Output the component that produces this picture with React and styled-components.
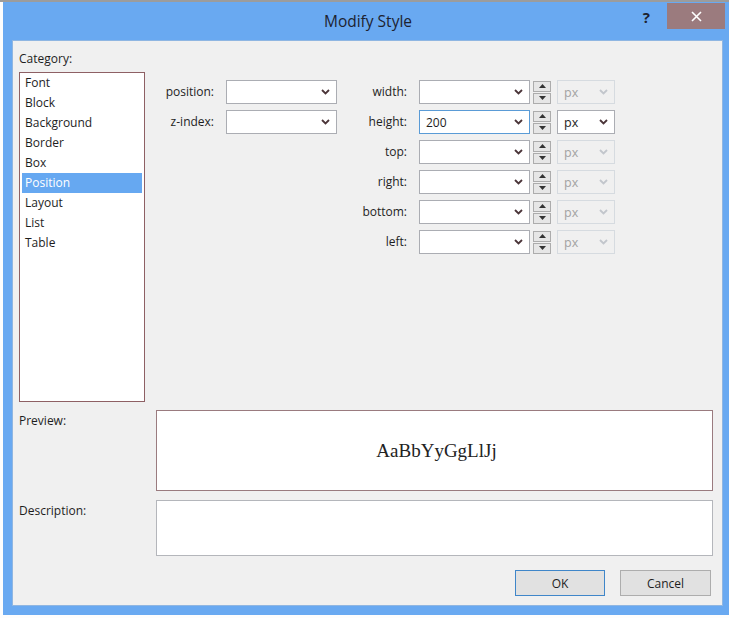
import React from 'react';
import styled, { createGlobalStyle } from 'styled-components';

const GlobalStyle = createGlobalStyle`
    html, body {
        margin: 0;
        padding: 0;
        background: #fdfdfd;
    }
    body {
        font-family: "Open Sans", "Noto Sans", sans-serif;
        font-size: 12px;
        color: #1e1e1e;
    }
`;

const Page = styled.div`
    width: 729px;
    height: 618px;
    border-top: 2px solid #9c9c9c;
    box-sizing: border-box;
    padding-left: 3px;
    overflow: hidden;
`;

const Window = styled.div`
    width: 726px;
    height: 613px;
    background: #69a9f1;
    display: flex;
    flex-direction: column;
    box-sizing: border-box;
`;

const TitleBar = styled.div`
    height: 38px;
    display: flex;
    align-items: center;
    position: relative;
`;

const Title = styled.div`
    flex: 1;
    text-align: center;
    font-size: 15.5px;
    color: #1d2330;
    padding-left: 4px;
`;

const HelpMark = styled.span`
    position: absolute;
    right: 79px;
    top: 5px;
    font-size: 15px;
    font-weight: 700;
    color: #1c2230;
`;

const CloseButton = styled.div`
    position: absolute;
    right: 4px;
    top: 1px;
    width: 58px;
    height: 26px;
    background: #9b7b7e;
    display: flex;
    align-items: center;
    justify-content: center;
`;

const Client = styled.div`
    margin: 0 6px 0 9px;
    height: 566px;
    background: #f0f0f0;
    border: 1px solid #8fb6e2;
    box-sizing: border-box;
    padding: 10px 6px 9px 6px;
    display: flex;
    flex-direction: column;
`;

const Top = styled.div`
    display: flex;
    align-items: flex-start;
`;

const CategoryCol = styled.div`
    width: 126px;
    display: flex;
    flex-direction: column;
`;

const Caption = styled.div`
    height: 21px;
    line-height: 16px;
`;

const ListBox = styled.div`
    height: 330px;
    background: #fff;
    border: 1px solid #8e6064;
    box-sizing: border-box;
    padding: 0 2px;
`;

const ListItem = styled.div`
    height: 20px;
    line-height: 20px;
    padding-left: 3px;
    background: ${p => (p.$selected ? '#66a8f1' : 'transparent')};
    color: ${p => (p.$selected ? '#fff' : '#1e1e1e')};
`;

const Fields = styled.div`
    display: flex;
    align-items: flex-start;
    margin-top: 29px;
`;

const FieldGrid = styled.div`
    display: grid;
    grid-template-columns: ${p => p.$label}px 111px ${p => (p.$units ? '21px 64px' : '')};
    row-gap: 6px;
    align-items: center;
`;

const Label = styled.div`
    text-align: right;
    padding-right: 12px;
    line-height: 24px;
`;

const Combo = styled.div`
    height: 24px;
    box-sizing: border-box;
    border: 1px solid ${p => (p.$focus ? '#5a9bd6' : p.$disabled ? '#d6dbe0' : '#abadb3')};
    background: ${p => (p.$disabled ? '#f0f0f0' : '#fff')};
    color: ${p => (p.$disabled ? '#a3a3a3' : '#1e1e1e')};
    display: flex;
    align-items: center;
    justify-content: space-between;
    padding: 0 6px 0 6px;
    margin-left: ${p => p.$gap || 0}px;
    font-size: ${p => (p.$small ? '12.5px' : '12px')};
`;

const Spinner = styled.div`
    display: flex;
    flex-direction: column;
    gap: 1px;
    margin-left: 3px;
    width: 18px;
`;

const SpinBtn = styled.div`
    height: 11px;
    border: 1px solid #acacac;
    background: #e6e6e6;
    box-sizing: border-box;
    display: flex;
    align-items: center;
    justify-content: center;
`;

const Row = styled.div`
    display: flex;
    align-items: flex-start;
    margin-top: ${p => p.$top}px;
`;

const RowLabel = styled.div`
    width: 137px;
    padding-top: 2px;
`;

const PreviewBox = styled.div`
    width: 557px;
    height: 81px;
    box-sizing: border-box;
    border: 1px solid #9a7b7f;
    background: #fff;
    display: flex;
    align-items: center;
    justify-content: center;
    font-family: "Liberation Serif", "Times New Roman", serif;
    font-size: 19px;
    color: #222;
    padding-left: 4px;
`;

const DescBox = styled.div`
    width: 557px;
    height: 56px;
    box-sizing: border-box;
    border: 1px solid #b4b6bb;
    background: #fff;
`;

const Buttons = styled.div`
    display: flex;
    justify-content: flex-end;
    gap: 15px;
    margin-top: 14px;
    padding-right: 5px;
`;

const Button = styled.div`
    width: ${p => p.$w}px;
    height: 26px;
    box-sizing: border-box;
    border: 1px solid ${p => (p.$default ? '#3f86c9' : '#adadad')};
    background: #e1e1e1;
    display: flex;
    align-items: center;
    justify-content: center;
`;

const Chevron = ({ color = '#4b3539' }) => (
    <svg width="9" height="6" viewBox="0 0 9 6">
        <polyline points="1,1 4.5,4.5 8,1" fill="none" stroke={color} strokeWidth="1.8" />
    </svg>
);

const Arrow = ({ up }) => (
    <svg width="7" height="4" viewBox="0 0 7 4">
        <polygon points={up ? '0,4 3.5,0 7,4' : '0,0 3.5,4 7,0'} fill="#333" />
    </svg>
);

const categories = ['Font', 'Block', 'Background', 'Border', 'Box', 'Position', 'Layout', 'List', 'Table'];

const boxFields = [
    { name: 'width', value: '', active: false },
    { name: 'height', value: '200', active: true },
    { name: 'top', value: '', active: false },
    { name: 'right', value: '', active: false },
    { name: 'bottom', value: '', active: false },
    { name: 'left', value: '', active: false },
];

const App = () => {
    return (
        <>
            <GlobalStyle />
            <Page>
                <Window>
                    <TitleBar>
                        <Title>Modify Style</Title>
                        <HelpMark>?</HelpMark>
                        <CloseButton>
                            <svg width="11" height="11" viewBox="0 0 11 11">
                                <path d="M1 1 L10 10 M10 1 L1 10" stroke="#fff" strokeWidth="1.6" />
                            </svg>
                        </CloseButton>
                    </TitleBar>
                    <Client>
                        <Top>
                            <CategoryCol>
                                <Caption>Category:</Caption>
                                <ListBox>
                                    {categories.map(c => (
                                        <ListItem key={c} $selected={c === 'Position'}>{c}</ListItem>
                                    ))}
                                </ListBox>
                            </CategoryCol>
                            <Fields>
                                <FieldGrid $label={81}>
                                    <Label>position:</Label>
                                    <Combo><span /><Chevron /></Combo>
                                    <Label>z-index:</Label>
                                    <Combo><span /><Chevron /></Combo>
                                </FieldGrid>
                                <FieldGrid $label={82} $units>
                                    {boxFields.map(f => (
                                        <React.Fragment key={f.name}>
                                            <Label>{f.name}:</Label>
                                            <Combo $focus={f.active}><span>{f.value}</span><Chevron /></Combo>
                                            <Spinner>
                                                <SpinBtn><Arrow up /></SpinBtn>
                                                <SpinBtn><Arrow /></SpinBtn>
                                            </Spinner>
                                            <Combo $gap={6} $disabled={!f.active} $small>
                                                <span>px</span>
                                                <Chevron color={f.active ? '#4b3539' : '#c2c6cc'} />
                                            </Combo>
                                        </React.Fragment>
                                    ))}
                                </FieldGrid>
                            </Fields>
                        </Top>
                        <Row $top={8}>
                            <RowLabel>Preview:</RowLabel>
                            <PreviewBox>AaBbYyGgLlJj</PreviewBox>
                        </Row>
                        <Row $top={9}>
                            <RowLabel>Description:</RowLabel>
                            <DescBox />
                        </Row>
                        <Buttons>
                            <Button $w={90} $default>OK</Button>
                            <Button $w={91}>Cancel</Button>
                        </Buttons>
                    </Client>
                </Window>
            </Page>
        </>
    );
};

export default App;
